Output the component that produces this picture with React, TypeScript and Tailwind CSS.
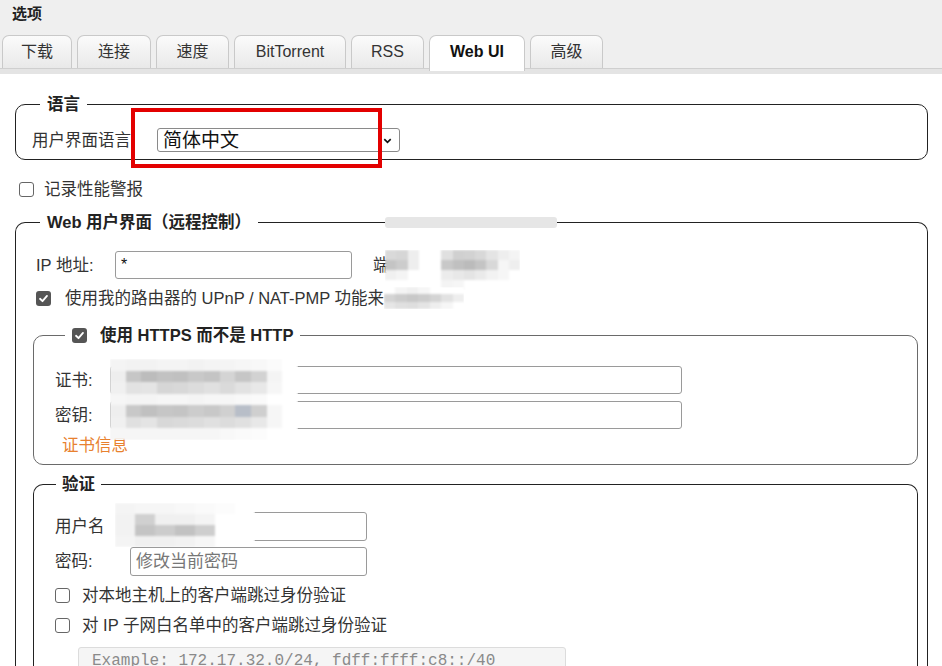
import type { ReactNode } from 'react'

const FONT = '[font-family:"Liberation_Sans","Noto_Sans_CJK_SC",sans-serif]'

const TABS = [
  { label: '下载', w: 'w-[70px]' },
  { label: '连接', w: 'w-[74px]' },
  { label: '速度', w: 'w-[73px]' },
  { label: 'BitTorrent', w: 'w-[112px]' },
  { label: 'RSS', w: 'w-[73px]' },
  { label: 'Web UI', w: 'w-[96px]', active: true },
  { label: '高级', w: 'w-[73px]' },
]

// redacted bits of the page are rendered as blurred tile mosaics
const PORT_TILES = [
  ['#d9d9d9', '#d6d6d6', '#eeeeee', '#ffffff', '#ffffff', '#e0e0e0', '#d0d0d0', '#d2d2d2', '#d8d8d8', '#e4e4e4', '#eeeeee', '#f4f4f4'],
  ['#c4c4c4', '#cccccc', '#eeeeee', '#ffffff', '#ffffff', '#c8c8c8', '#c0c0c0', '#bbbbbb', '#c4c4c4', '#d8d8d8', '#f6f6f6', '#eeeeee'],
  ['#f0f0f0', '#f4f4f4', '#ffffff', '#ffffff', '#ffffff', '#ececec', '#e8e8e8', '#e4e4e4', '#eaeaea', '#f2f2f2', '#f6f6f6', '#ffffff'],
  ['#ffffff', '#ffffff', '#ffffff', '#ffffff', '#ffffff', '#f4f4f4', '#f6f6f6', '#ffffff', '#ffffff', '#ffffff', '#ffffff', '#ffffff'],
]

const UPNP_TILES = [
  ['#ffffff', '#f4f4f4', '#f0f0f0', '#f6f6f6', '#ffffff', '#ffffff', '#ffffff'],
  ['#d4d4d4', '#cccccc', '#c8c8c8', '#cccccc', '#d4d4d4', '#e2e2e2', '#eeeeee'],
  ['#e6e6e6', '#e0e0e0', '#dedede', '#e4e4e4', '#eeeeee', '#f6f6f6', '#ffffff'],
]

const CERT_TILES = [
  ['#f4f4f4', '#f2f2f2', '#f2f2f2', '#f4f4f4', '#f4f4f4', '#f2f2f2', '#f4f4f4', '#f4f4f4', '#f6f6f6', '#f8f8f8', '#fbfbfb', '#ffffff'],
  ['#eeeeee', '#c6c6c6', '#bcbcbc', '#c2c2c2', '#c0c0c0', '#c8c8c8', '#c4c4c4', '#d4d4d4', '#c6c6c6', '#d2d2d2', '#f4f4f4', '#ffffff'],
  ['#f0f0f0', '#e2e2e2', '#e4e4e4', '#d6d6d6', '#d8d8d8', '#dcdcdc', '#e0e0e0', '#dadada', '#e2e2e2', '#e8e8e8', '#f6f6f6', '#ffffff'],
  ['#f6f6f6', '#f4f4f4', '#f4f4f4', '#f6f6f6', '#f6f6f6', '#f4f4f4', '#f6f6f6', '#f6f6f6', '#f8f8f8', '#fafafa', '#ffffff', '#ffffff'],
  ['#eeeeee', '#c8c8c8', '#c0c0c0', '#c6c6c6', '#c4c4c4', '#cccccc', '#c8c8c8', '#d0d0d0', '#b8bec8', '#cfcfcf', '#f6f6f6', '#ffffff'],
  ['#f0f0f0', '#e0e0e0', '#e4e4e4', '#d8d8d8', '#dadada', '#dcdcdc', '#e0e0e0', '#dcdcdc', '#e0e0e0', '#e8e8e8', '#f6f6f6', '#ffffff'],
  ['#f6f6f6', '#f6f6f6', '#f6f6f6', '#f6f6f6', '#f6f6f6', '#f6f6f6', '#f6f6f6', '#f8f8f8', '#fafafa', '#fcfcfc', '#ffffff', '#ffffff'],
]

const USER_TILES = [
  ['#f4f4f4', '#f6f6f6', '#f6f6f6', '#f8f8f8', '#fafafa', '#fcfcfc', '#ffffff'],
  ['#f2f2f2', '#d0d0d0', '#f0f0f0', '#f0f0f0', '#f4f4f4', '#ffffff', '#ffffff'],
  ['#f2f2f2', '#c4c4c4', '#cccccc', '#c2c2c2', '#cecece', '#ffffff', '#ffffff'],
  ['#f4f4f4', '#f0f0f0', '#f0f0f0', '#f2f2f2', '#f6f6f6', '#ffffff', '#ffffff'],
]

function Mosaic({ tiles, className }: { tiles: string[][]; className: string }) {
  return (
    <div className={`absolute flex flex-col overflow-hidden ${className}`}>
      <div className="flex flex-1 flex-col blur-[1px]">
        {tiles.map((row, r) => (
          <div key={r} className="flex flex-1">
            {row.map((c, i) => (
              <div key={i} className="flex-1" style={{ backgroundColor: c }} />
            ))}
          </div>
        ))}
      </div>
    </div>
  )
}

function Checkbox({ checked = false }: { checked?: boolean }) {
  if (checked) {
    return (
      <span className="flex h-[15px] w-[15px] shrink-0 items-center justify-center rounded-[3px] bg-[#555]">
        <svg viewBox="0 0 12 12" className="h-[11px] w-[11px]">
          <path d="M2.2 6.3 L4.9 8.9 L9.8 3.2" fill="none" stroke="#fff" strokeWidth="2" strokeLinecap="round" strokeLinejoin="round" />
        </svg>
      </span>
    )
  }
  return <span className="h-[15px] w-[15px] shrink-0 rounded-[3px] border border-[#666] bg-white" />
}

function Legend({ children, className }: { children: ReactNode; className: string }) {
  return (
    <legend className={`text-[16.5px] font-bold leading-[20px] text-[#222] ${className}`}>{children}</legend>
  )
}

function TextBox({ className, children }: { className: string; children?: ReactNode }) {
  return (
    <div className={`flex items-center rounded-[3px] border border-[#9a9a9a] bg-white px-[5px] ${className}`}>
      {children}
    </div>
  )
}

export default function App() {
  return (
    <div className={`relative h-[666px] w-[942px] overflow-hidden bg-white text-[#333] ${FONT}`}>
      <div className="flex h-[32px] items-start bg-[#efefef] pl-[12px] pt-[4px] text-[15px] font-bold leading-[20px] text-[#222]">
        选项
      </div>

      <div className="bg-[#efefef]">
        <div className="flex h-[36px] items-end gap-[5px] pl-[2px]">
          {TABS.map((t) =>
            t.active ? (
              <div
                key={t.label}
                className={`relative z-10 -mb-[3px] flex h-[36px] items-center justify-center rounded-t-[7px] border border-b-0 border-[#c9c9c9] bg-white pb-[3px] text-[16px] font-bold text-[#111] ${t.w}`}
              >
                {t.label}
              </div>
            ) : (
              <div
                key={t.label}
                className={`flex h-[33px] items-center justify-center rounded-t-[7px] border border-b-0 border-[#c9c9c9] bg-gradient-to-b from-[#fbfbfb] to-[#e9e9e9] text-[16px] text-[#333] ${t.w}`}
              >
                {t.label}
              </div>
            ),
          )}
        </div>
        <div className="h-[6px] border-t border-[#cfcfcf] bg-[#e4e4e4]" />
      </div>

      <div className="relative pl-[15px] pr-[14px] pt-[20px]">
        <fieldset className="rounded-[10px] border border-[#222] pb-[7px] pl-[16px] pr-[16px]">
          <Legend className="ml-[8px] px-[7px]">语言</Legend>
          <div className="mt-[14px] flex h-[24px] items-center">
            <span className="w-[125px] text-[16.5px]">用户界面语言:</span>
            <div className="flex h-[24px] w-[243px] items-center justify-between rounded-[3px] border border-[#8a8a8a] bg-white pl-[5px] pr-[6px]">
              <span className="text-[19px] leading-none text-[#111]">简体中文</span>
              <svg viewBox="0 0 12 12" className="h-[11px] w-[11px]">
                <path d="M2.5 4.5 L6 8 L9.5 4.5" fill="none" stroke="#111" strokeWidth="1.8" />
              </svg>
            </div>
          </div>
        </fieldset>

        <div className="mt-[18px] flex h-[22px] items-center gap-[10px] pl-[4px] text-[16.5px]">
          <Checkbox />
          <span>记录性能警报</span>
        </div>

        <fieldset className="mt-[12px] rounded-t-[10px] border border-b-0 border-[#222] pl-[17px] pr-[9px]">
          <Legend className="ml-[7px] px-[7px]">Web 用户界面（远程控制）</Legend>

          <div className="mt-[19px] flex h-[28px] items-center pl-[3px] text-[16.5px]">
            <span className="w-[79px]">IP 地址:</span>
            <TextBox className="h-[28px] w-[237px]">
              <span className="text-[16px] text-[#111]">*</span>
            </TextBox>
            <span className="ml-[21px]">端</span>
          </div>

          <div className="mt-[8px] flex h-[22px] items-center gap-[14px] pl-[3px] text-[16.5px]">
            <Checkbox checked />
            <span>使用我的路由器的 UPnP / NAT-PMP 功能来</span>
          </div>

          <fieldset className="mt-[16px] rounded-[10px] border border-[#6a6a6a] pb-[9px] pl-[21px] pr-[16px]">
            <Legend className="ml-[10px] flex items-center gap-[13px] px-[7px]">
              <Checkbox checked />
              <span>使用 HTTPS 而不是 HTTP</span>
            </Legend>
            <div className="mt-[21px] flex h-[28px] items-center text-[16.5px]">
              <span className="w-[55px]">证书:</span>
              <TextBox className="h-[28px] w-[572px]" />
            </div>
            <div className="mt-[7px] flex h-[28px] items-center text-[16.5px]">
              <span className="w-[55px]">密钥:</span>
              <TextBox className="h-[28px] w-[572px]" />
            </div>
            <div className="mt-[6px] flex h-[20px] items-center pl-[7px] text-[16.5px] text-[#e8812f]">证书信息</div>
          </fieldset>

          <fieldset className="mt-[9px] rounded-t-[10px] border border-b-0 border-[#222] pl-[21px] pr-[16px]">
            <Legend className="ml-[1px] px-[6px]">验证</Legend>
            <div className="mt-[18px] flex h-[29px] items-center text-[16.5px]">
              <span className="w-[75px]">用户名</span>
              <TextBox className="h-[29px] w-[237px]" />
            </div>
            <div className="mt-[6px] flex h-[29px] items-center text-[16.5px]">
              <span className="w-[75px]">密码:</span>
              <TextBox className="h-[29px] w-[237px]">
                <span className="text-[17px] text-[#777]">修改当前密码</span>
              </TextBox>
            </div>
            <div className="mt-[8px] flex h-[22px] items-center gap-[12px] text-[16.5px]">
              <Checkbox />
              <span>对本地主机上的客户端跳过身份验证</span>
            </div>
            <div className="mt-[8px] flex h-[22px] items-center gap-[12px] text-[16.5px]">
              <Checkbox />
              <span>对 IP 子网白名单中的客户端跳过身份验证</span>
            </div>
            <div className="ml-[23px] mt-[11px] h-[60px] w-[488px] rounded-[3px] border border-[#dcdcdc] bg-[#f5f5f5] px-[13px] pt-[3px] [font-family:'Liberation_Mono',monospace] text-[16px] leading-[20px] text-[#8a8a8a]">
              Example: 172.17.32.0/24, fdff:ffff:c8::/40
            </div>
          </fieldset>
        </fieldset>

        {/* redacted values */}
        <div className="absolute left-[385px] top-[143px] h-[11px] w-[172px] rounded-[3px] bg-[#e6e6e6] blur-[0.5px]" />
        <Mosaic tiles={PORT_TILES} className="left-[385px] top-[176px] h-[40px] w-[135px]" />
        <Mosaic tiles={UPNP_TILES} className="left-[384px] top-[213px] h-[22px] w-[80px]" />
        <Mosaic tiles={CERT_TILES} className="left-[110px] top-[285px] h-[81px] w-[188px]" />
        <Mosaic tiles={USER_TILES} className="left-[115px] top-[429px] h-[44px] w-[140px]" />

        {/* highlight around the language picker */}
        <div className="absolute left-[131px] top-[34px] h-[60px] w-[251px] border-[4px] border-[#e30000]" />
      </div>
    </div>
  )
}
